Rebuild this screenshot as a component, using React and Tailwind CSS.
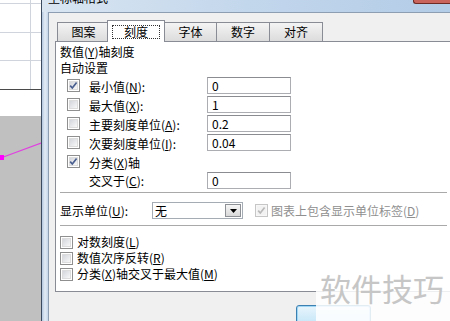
import React from "react";

function Box({ checked, disabled }) {
  return (
    <span
      className={
        disabled
          ? "relative shrink-0 block w-[13px] h-[13px] border border-[#c6c6c6] bg-[#f7f7f7] p-[1px]"
          : "relative shrink-0 block w-[13px] h-[13px] border border-[#8f8f8f] bg-white p-[1px]"
      }
    >
      <span
        className={
          disabled
            ? "block w-full h-full bg-[#f2f2f2]"
            : "block w-full h-full border border-[#dcdcdc] bg-gradient-to-br from-[#d3d6dc] to-[#f8f8f8]"
        }
      />
      {checked && (
        <svg className="absolute left-0 top-0" width="11" height="11" viewBox="0 0 11 11">
          <path
            d="M2.2 5.6 L4.3 8 L8.6 2.4"
            fill="none"
            stroke={disabled ? "#b9b9b9" : "#4a5f8f"}
            strokeWidth="1.7"
          />
        </svg>
      )}
    </span>
  );
}

function Input({ value }) {
  return (
    <div className="w-[84px] h-[17px] border border-[#abadb3] border-t-[#8a8c92] bg-white pl-[4px] text-[12px] leading-[15px] text-black">
      {value}
    </div>
  );
}

function Row({ checked, box = true, label, value }) {
  return (
    <div className="flex items-center h-[19px]">
      {box ? (
        <>
          <div className="w-[7px] shrink-0" />
          <Box checked={checked} />
          <div className="ml-[9px] w-[118px] shrink-0 pt-[2px]">{label}</div>
        </>
      ) : (
        <div className="ml-[29px] w-[118px] shrink-0 pt-[1px]">{label}</div>
      )}
      {value !== undefined && <Input value={value} />}
    </div>
  );
}

function Tab({ label, className }) {
  return (
    <div
      className={
        "h-[19px] border-t border-x border-[#898c95] bg-gradient-to-b from-[#f4f4f4] to-[#dcdcdc] flex items-center justify-center text-[12px] leading-[14px] " +
        className
      }
    >
      {label}
    </div>
  );
}

function CheckRow({ label }) {
  return (
    <div className="flex items-center h-[16px]">
      <Box />
      <div className="ml-[4px]">{label}</div>
    </div>
  );
}

export default function App() {
  return (
    <div className="w-[450px] h-[321px] overflow-hidden relative flex bg-white text-black font-['Noto_Sans_CJK_SC','Liberation_Sans',sans-serif]">
      {/* spreadsheet behind */}
      <div className="w-[41px] shrink-0 flex flex-col">
        <div className="h-[4px] border-b border-[#d0d4dc] flex">
          <div className="w-[31px] border-r border-[#d0d4dc]" />
        </div>
        <div className="h-[29px] border-b border-[#d0d4dc] flex">
          <div className="w-[31px] border-r border-[#d0d4dc]" />
        </div>
        <div className="h-[28px] border-b border-[#d0d4dc] flex">
          <div className="w-[31px] border-r border-[#d0d4dc]" />
        </div>
        <div className="h-[29px] border-b border-[#4a4a4a] flex">
          <div className="w-[31px] border-r border-[#d0d4dc]" />
        </div>
        <div className="h-[26px] bg-white" />
        <div className="flex-1 bg-[#c0c0c0] relative">
          <svg className="absolute left-0 top-0" width="41" height="80" viewBox="0 0 41 80">
            <line x1="2" y1="41.5" x2="41" y2="27" stroke="#e040e0" strokeWidth="1.2" />
            <rect x="-1" y="39" width="5" height="5" fill="#ff00ff" />
          </svg>
        </div>
      </div>

      {/* dialog */}
      <div className="flex-1 min-w-0 flex flex-col border-l border-[#3b4a5e]">
        <div className="h-[12px] shrink-0 flex items-start overflow-hidden bg-gradient-to-r from-[#d9e5f1] via-[#c3d7ec] to-[#b3cce7]">
          <span className="pl-[6px] -mt-[9px] text-[12px] leading-[14px] text-black">坐标轴格式</span>
          <div className="ml-auto w-[37px] h-[4px] bg-[#c8645b] border-b border-l border-[#6e2b25] rounded-bl-[3px]" />
        </div>
        <div className="flex-1 flex min-h-0">
          <div className="w-[6px] shrink-0 bg-gradient-to-r from-[#b3c7de] via-[#e3ecf6] to-[#c6d6e9]" />
          <div className="flex-1 bg-[#f0f0f0] border-t border-l border-[#8d9db2] pl-[6px] pt-[7px] flex flex-col">
            {/* tabs */}
            <div className="h-[21px] flex items-end pl-[2px] relative z-10">
              <Tab label="图案" className="w-[53px]" />
              <div className="relative z-10 w-[58px] h-[22px] -ml-[3px] -mb-px border-t border-x border-[#898c95] bg-white px-[4px] pt-[4px]">
                <div className="h-[14px] border border-dotted border-[#333] flex items-center justify-center text-[12px] leading-[14px]">
                  刻度
                </div>
              </div>
              <Tab label="字体" className="w-[53px] -ml-px" />
              <Tab label="数字" className="w-[54px] -ml-px" />
              <Tab label="对齐" className="w-[54px] -ml-px" />
            </div>
            {/* panel */}
            <div className="w-[398px] h-[251px] shrink-0 border border-[#898c95] bg-white px-[4px] pt-[2px] text-[12px] leading-[16px]">
              <div className="h-[16px]">
                数值(<u>Y</u>)轴刻度
              </div>
              <div className="h-[16px]">自动设置</div>
              <Row checked label={<>最小值(<u>N</u>):</>} value="0" />
              <Row label={<>最大值(<u>X</u>):</>} value="1" />
              <Row label={<>主要刻度单位(<u>A</u>):</>} value="0.2" />
              <Row label={<>次要刻度单位(<u>I</u>):</>} value="0.04" />
              <Row checked label={<>分类(<u>X</u>)轴</>} />
              <Row box={false} label={<>交叉于(<u>C</u>):</>} value="0" />
              <div className="mt-[2px] h-px w-[387px] bg-[#a9a9a9]" />
              <div className="mt-[8px] h-[19px] flex items-center">
                <div className="w-[92px] shrink-0 pt-[1px]">
                  显示单位(<u>U</u>):
                </div>
                <div className="w-[91px] h-[17px] border border-[#a6acb4] bg-white flex items-center justify-between pl-[2px] pr-[1px]">
                  <span className="leading-[14px]">无</span>
                  <div className="w-[16px] h-[13px] border border-[#8e9196] bg-gradient-to-b from-[#f6f6f6] to-[#d9d9d9] flex items-center justify-center">
                    <svg width="7" height="4" viewBox="0 0 7 4">
                      <path d="M0 0 H7 L3.5 4 Z" fill="#000" />
                    </svg>
                  </div>
                </div>
                <div className="ml-[12px]">
                  <Box checked disabled />
                </div>
                <div className="ml-[3px] text-[#8f8f8f] pt-[1px]">
                  图表上包含显示单位标签(<u>D</u>)
                </div>
              </div>
              <div className="mt-[5px] h-px w-[387px] bg-[#a9a9a9]" />
              <div className="mt-[8px] flex flex-col">
                <CheckRow label={<>对数刻度(<u>L</u>)</>} />
                <CheckRow label={<>数值次序反转(<u>R</u>)</>} />
                <CheckRow label={<>分类(<u>X</u>)轴交叉于最大值(<u>M</u>)</>} />
              </div>
            </div>
            {/* buttons */}
            <div className="mt-[13px] ml-[241px] w-[75px] h-[23px] shrink-0 rounded-[3px] border border-[#3c7fb1] bg-gradient-to-b from-[#e8f5fc] to-[#bfe3f7] shadow-[inset_0_0_0_1px_#9fd7f5]" />
          </div>
        </div>
      </div>

      {/* watermark */}
      <div className="absolute left-[316px] top-[258px] w-[134px] h-[63px] bg-white/85 pl-[4px] pt-[14px]">
        <span className="text-[31px] leading-[31px] text-[#c6c6c6] whitespace-nowrap">软件技巧</span>
      </div>
    </div>
  );
}
